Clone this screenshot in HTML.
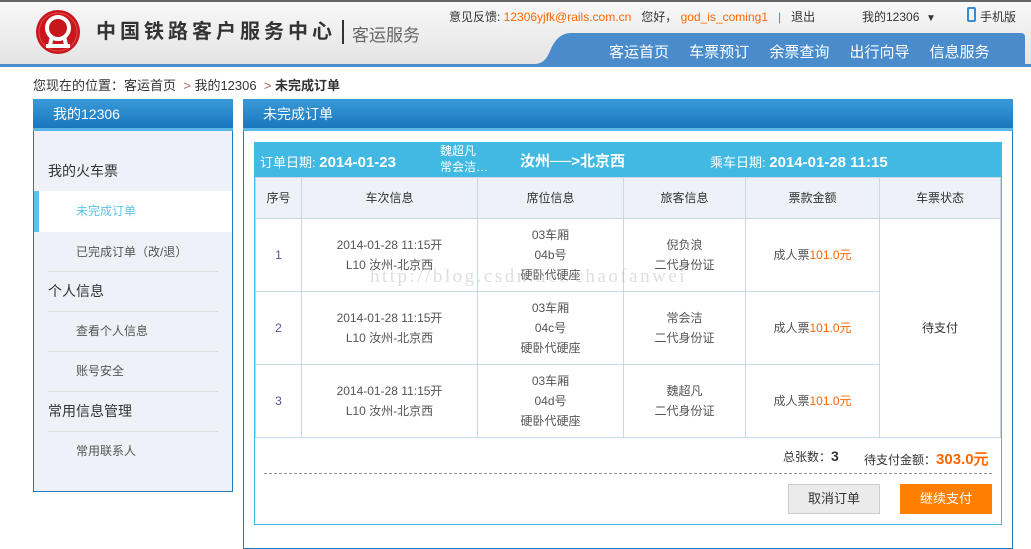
<!DOCTYPE html>
<html><head><meta charset="utf-8"><style>
*{margin:0;padding:0;box-sizing:border-box}
body{width:1031px;height:536px;overflow:hidden;background:#fff;font-family:"Liberation Sans","Noto Sans CJK SC",sans-serif;font-size:12px;color:#333;position:relative}
.a{position:absolute;white-space:nowrap}
.hdr{position:absolute;left:0;top:0;width:1031px;height:64px;background:linear-gradient(#f8f8f8,#e4e4e4);border-top:2px solid #666}
.blue{position:absolute;left:0;top:64px;width:1031px;height:3px;background:#4a8ccb}
.ph{position:absolute;height:32px;background:linear-gradient(#3a9ad8,#1a76be);color:#fff;font-size:14px;line-height:30px;border-bottom:3px solid #5ab8e8}
td,th{border:1px solid #c6d9e5;text-align:center;font-weight:normal;font-size:12px;color:#555;line-height:20px}
th{background:#eef1f8;color:#333}
table{border-collapse:collapse;position:absolute;left:255px;top:177px;width:746px}
.o{color:#f60}
.menu{position:absolute;left:48px;font-size:14px;color:#333}
.sub{position:absolute;left:76px;font-size:12px;color:#555}
.ln{position:absolute;left:48px;width:170px;height:1px;background:#ddd}
.bd{font-family:"Liberation Sans",sans-serif;font-weight:bold;font-size:15px}
</style></head><body>
<div class="hdr"></div>
<div class="blue"></div>
<svg class="a" style="left:34px;top:9px" width="48" height="46" viewBox="0 0 48 46"><circle cx="24" cy="23" r="22" fill="#c8161d"/><circle cx="24" cy="23" r="19" fill="none" stroke="#e84a4a" stroke-width="1"/><circle cx="24" cy="19" r="11" fill="none" stroke="#fff" stroke-width="4"/><path d="M18 27 L16 36 M30 27 L32 36 M12 37 H36" stroke="#fff" stroke-width="4" fill="none"/></svg>
<div class="a" style="left:96px;top:15px;font-size:20px;font-weight:bold;color:#333;letter-spacing:4px">中国铁路客户服务中心</div>
<div class="a" style="left:342px;top:20px;width:2px;height:24px;background:#333"></div>
<div class="a" style="left:352px;top:21px;font-size:17px;color:#666">客运服务</div>
<div class="a" style="left:449px;top:8px;color:#333">意见反馈: <span class="o">12306yjfk@rails.com.cn</span>&nbsp;&nbsp; 您好，<span class="o">&nbsp;god_is_coming1</span>&nbsp;&nbsp;&nbsp;<span style="color:#4a8ccb">|</span>&nbsp;&nbsp; 退出</div>
<div class="a" style="left:862px;top:8px">我的12306 &nbsp;<span style="font-size:10px">▼</span></div>
<div class="a" style="left:967px;top:7px;width:9px;height:15px;border:2px solid #3a8ad0;border-radius:2px"></div>
<div class="a" style="left:980px;top:8px">手机版</div>
<svg class="a" style="left:535px;top:33px" width="496" height="32"><path d="M0 31 Q10 31 15 18 Q22 0 36 0 H486 Q490 0 490 4 V32 H0Z" fill="#4a8ccb"/></svg>
<div class="a" style="left:609px;top:41px;font-size:15px;color:#fff;word-spacing:16px">客运首页 车票预订 余票查询 出行向导 信息服务</div>
<div class="a" style="left:33px;top:75px;font-size:13px;color:#333">您现在的位置：客运首页 &nbsp;<span style="color:#a66">&gt;</span> 我的12306 &nbsp;<span style="color:#a66">&gt;</span> <b>未完成订单</b></div>
<div class="a" style="left:33px;top:99px;width:200px;height:393px;background:#eef1f8;border:1px solid #1f7bc2"></div>
<div class="ph" style="left:33px;top:99px;width:200px;padding-left:20px">我的12306</div>
<div class="menu" style="top:161px">我的火车票</div>
<div class="a" style="left:34px;top:191px;width:198px;height:41px;background:#fff;border-left:5px solid #5bc3e8"></div>
<div class="sub" style="top:202px;color:#5bc3e8">未完成订单</div>
<div class="sub" style="top:243px">已完成订单（改/退）</div>
<div class="ln" style="top:271px"></div>
<div class="menu" style="top:281px">个人信息</div>
<div class="ln" style="top:311px"></div>
<div class="sub" style="top:322px">查看个人信息</div>
<div class="ln" style="top:351px"></div>
<div class="sub" style="top:362px">账号安全</div>
<div class="ln" style="top:391px"></div>
<div class="menu" style="top:401px">常用信息管理</div>
<div class="ln" style="top:431px"></div>
<div class="sub" style="top:442px">常用联系人</div>
<div class="a" style="left:243px;top:99px;width:770px;height:450px;border:1px solid #1f7bc2"></div>
<div class="ph" style="left:243px;top:99px;width:770px;padding-left:20px">未完成订单</div>
<div class="a" style="left:254px;top:142px;width:748px;height:383px;border:1px solid #41b9e2"></div>
<div class="a" style="left:254px;top:142px;width:748px;height:36px;background:#41b9e2;color:#fff"></div>
<div class="a" style="left:260px;top:152px;color:#fff;font-size:13px">订单日期: <span class="bd">2014-01-23</span></div>
<div class="a" style="left:440px;top:143px;color:#fff;line-height:16px">魏超凡<br>常会洁…</div>
<div class="a" style="left:520px;top:150px;color:#fff;font-size:15px;font-weight:bold">汝州──&gt;北京西</div>
<div class="a" style="left:710px;top:152px;color:#fff;font-size:13px">乘车日期: <span class="bd">2014-01-28 11:15</span></div>
<table>
<tr style="height:41px"><th style="width:46px">序号</th><th style="width:176px">车次信息</th><th style="width:146px">席位信息</th><th style="width:122px">旅客信息</th><th style="width:134px">票款金额</th><th>车票状态</th></tr>
<tr style="height:73px"><td style="color:#559">1</td><td>2014-01-28 11:15开<br>L10 汝州-北京西</td><td>03车厢<br>04b号<br>硬卧代硬座</td><td>倪负浪<br>二代身份证</td><td>成人票<span class="o">101.0元</span></td><td rowspan="3" style="color:#333">待支付</td></tr>
<tr style="height:73px"><td style="color:#559">2</td><td>2014-01-28 11:15开<br>L10 汝州-北京西</td><td>03车厢<br>04c号<br>硬卧代硬座</td><td>常会洁<br>二代身份证</td><td>成人票<span class="o">101.0元</span></td></tr>
<tr style="height:73px"><td style="color:#559">3</td><td>2014-01-28 11:15开<br>L10 汝州-北京西</td><td>03车厢<br>04d号<br>硬卧代硬座</td><td>魏超凡<br>二代身份证</td><td>成人票<span class="o">101.0元</span></td></tr>
</table>
<div class="a" style="left:370px;top:266px;font-family:'Liberation Serif',serif;font-size:19px;letter-spacing:2.5px;color:rgba(190,190,190,0.5)">http://blog.csdn.net/chaofanwei</div>
<div class="a" style="left:783px;top:448px;color:#333">总张数：<b style="font-size:14px">3</b></div>
<div class="a" style="left:864px;top:448px;color:#333">待支付金额：<span class="bd o">303.0元</span></div>
<div class="a" style="left:264px;top:473px;width:728px;border-top:1px dashed #999"></div>
<div class="a" style="left:788px;top:484px;width:92px;height:30px;background:#ecebec;border:1px solid #ccc;text-align:center;line-height:28px;font-size:13px">取消订单</div>
<div class="a" style="left:900px;top:484px;width:92px;height:30px;background:#ff7f00;color:#fff;text-align:center;line-height:30px;font-size:13px">继续支付</div>
</body></html>
